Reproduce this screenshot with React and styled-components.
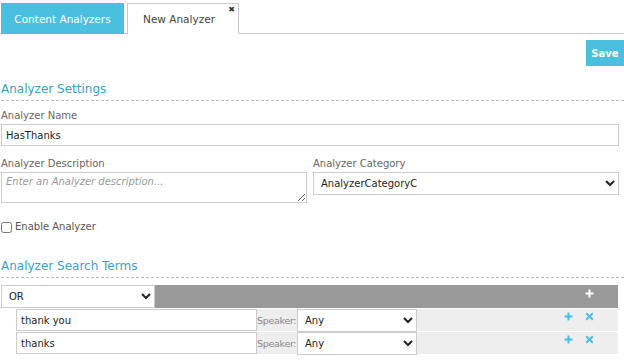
import React from "react";
import styled, { createGlobalStyle } from "styled-components";

const GlobalStyle = createGlobalStyle`
  body {
    margin: 0;
    background: #fff;
    font-family: "DejaVu Sans", Verdana, sans-serif;
    font-size: 11px;
    color: #333;
  }
`;

const Page = styled.div`
  width: 624px;
  height: 364px;
  overflow: hidden;
`;

const TabBar = styled.div`
  display: flex;
  align-items: flex-end;
  padding-top: 2px;
  padding-left: 1px;
  border-bottom: 1px solid #c8c8c8;
  height: 31px;
`;

const Tab = styled.div`
  position: relative;
  height: 31px;
  box-sizing: border-box;
  display: flex;
  align-items: center;
  justify-content: center;
  width: ${(p) => p.w}px;
  margin-right: 3px;
  font-size: 10.5px;
  background: ${(p) => (p.active ? "#fff" : "#4bbfe0")};
  color: ${(p) => (p.active ? "#444" : "#fff")};
  border: 1px solid ${(p) => (p.active ? "#c8c8c8" : "#4bbfe0")};
  border-bottom: ${(p) => (p.active ? "1px solid #fff" : "none")};
  margin-bottom: -1px;
  padding-right: ${(p) => (p.active ? "8px" : "0")};
`;

const TabClose = styled.span`
  position: absolute;
  top: 1px;
  right: 3px;
  font-size: 8px;
  font-weight: bold;
  color: #333;
`;

const Toolbar = styled.div`
  display: flex;
  justify-content: flex-end;
  padding-top: 6px;
`;

const SaveButton = styled.button`
  width: 38px;
  height: 26px;
  border: none;
  background: #4bbfe0;
  color: #fff;
  font-family: "DejaVu Sans", Verdana, sans-serif;
  font-weight: bold;
  font-size: 10px;
  padding: 0;
`;

const Section = styled.div`
  padding: 0 5px 0 1px;
`;

const SectionTitle = styled.div`
  color: #3a9fca;
  font-size: 12px;
  line-height: 14px;
  padding-bottom: 4px;
  border-bottom: 1px dashed #bdbdbd;
  margin-top: ${(p) => p.mt}px;
  margin-right: -5px;
`;

const Label = styled.div`
  color: #666;
  font-size: 10px;
  line-height: 12px;
  margin-bottom: 2px;
  margin-top: ${(p) => p.mt || 0}px;
`;

const TextInput = styled.input`
  box-sizing: border-box;
  width: 100%;
  height: ${(p) => p.h || 22}px;
  border: 1px solid #ccc;
  font-family: "DejaVu Sans", Verdana, sans-serif;
  font-size: 10px;
  color: #222;
  padding: 0 4px;
  outline: none;
  border-radius: 0;
  display: block;
`;

const TextArea = styled.textarea`
  box-sizing: border-box;
  width: 100%;
  height: 31px;
  border: 1px solid #ccc;
  font-family: "DejaVu Sans", Verdana, sans-serif;
  font-size: 10px;
  padding: 3px 4px;
  resize: vertical;
  display: block;
  &::placeholder {
    color: #999;
    font-style: italic;
  }
`;

const Select = styled.select`
  box-sizing: border-box;
  width: ${(p) => p.w || "100%"};
  height: 23px;
  border: 1px solid #ccc;
  border-radius: 0;
  background: #fff;
  font-family: "DejaVu Sans", Verdana, sans-serif;
  font-size: 10px;
  color: #222;
  padding: 0 3px;
  outline: none;
  display: block;
`;

const TwoCol = styled.div`
  display: grid;
  grid-template-columns: 306px 306px;
  column-gap: 6px;
  margin-top: 12px;
`;

const CheckRow = styled.label`
  display: flex;
  align-items: center;
  gap: 3px;
  margin-top: 18px;
  color: #555;
  font-size: 10px;
  line-height: 12px;
  input {
    margin: 0;
    width: 11px;
    height: 11px;
  }
`;

const TermsTable = styled.div`
  margin-top: 7px;
  margin-left: 1px;
  width: 617px;
`;

const HeaderRow = styled.div`
  display: flex;
  height: 23px;
  background: #999;
`;

const HeaderTail = styled.div`
  flex: 1;
  display: flex;
  justify-content: flex-end;
  align-items: center;
  padding-right: 24px;
  padding-bottom: 6px;
`;

const TermRow = styled.div`
  display: flex;
  align-items: stretch;
  height: 22px;
  margin-top: 1px;
  margin-left: 15px;
  background: #eee;
`;

const TermInput = styled(TextInput)`
  width: 241px;
  height: 22px;
`;

const SpeakerLabel = styled.span`
  width: 40px;
  display: flex;
  align-items: center;
  color: #888;
  font-size: 9.5px;
  letter-spacing: -0.3px;
  white-space: nowrap;
  overflow: hidden;
`;

const Actions = styled.div`
  flex: 1;
  display: flex;
  justify-content: flex-end;
  align-items: flex-start;
  gap: 12px;
  padding-right: 24px;
  padding-top: 3px;
`;

const Icon = ({ kind, color }) =>
  kind === "plus" ? (
    <svg width="9" height="9" viewBox="0 0 9 9">
      <path d="M4.5 0.5v8M0.5 4.5h8" stroke={color} strokeWidth="2" />
    </svg>
  ) : (
    <svg width="9" height="9" viewBox="0 0 9 9">
      <path d="M1.2 1.2l6.6 6.6M7.8 1.2l-6.6 6.6" stroke={color} strokeWidth="2" />
    </svg>
  );

const terms = ["thank you", "thanks"];

export default function App() {
  return (
    <Page>
      <GlobalStyle />
      <TabBar>
        <Tab w={123}>Content Analyzers</Tab>
        <Tab active w={112}>
          New Analyzer
          <TabClose>✖</TabClose>
        </Tab>
      </TabBar>
      <Toolbar>
        <SaveButton>Save</SaveButton>
      </Toolbar>
      <Section>
        <SectionTitle mt={16}>Analyzer Settings</SectionTitle>
        <Label mt={9}>Analyzer Name</Label>
        <TextInput defaultValue="HasThanks" />
        <TwoCol>
          <div>
            <Label>Analyzer Description</Label>
            <TextArea placeholder="Enter an Analyzer description..." />
          </div>
          <div>
            <Label>Analyzer Category</Label>
            <Select>
              <option>AnalyzerCategoryC</option>
            </Select>
          </div>
        </TwoCol>
        <CheckRow>
          <input type="checkbox" />
          Enable Analyzer
        </CheckRow>
        <SectionTitle mt={26}>Analyzer Search Terms</SectionTitle>
      </Section>
      <TermsTable>
        <HeaderRow>
          <Select w="154px">
            <option>OR</option>
          </Select>
          <HeaderTail>
            <Icon kind="plus" color="#fff" />
          </HeaderTail>
        </HeaderRow>
        {terms.map((t) => (
          <TermRow key={t}>
            <TermInput defaultValue={t} />
            <SpeakerLabel>Speaker:</SpeakerLabel>
            <Select w="120px">
              <option>Any</option>
            </Select>
            <Actions>
              <Icon kind="plus" color="#4bbfe0" />
              <Icon kind="x" color="#4bbfe0" />
            </Actions>
          </TermRow>
        ))}
      </TermsTable>
    </Page>
  );
}
